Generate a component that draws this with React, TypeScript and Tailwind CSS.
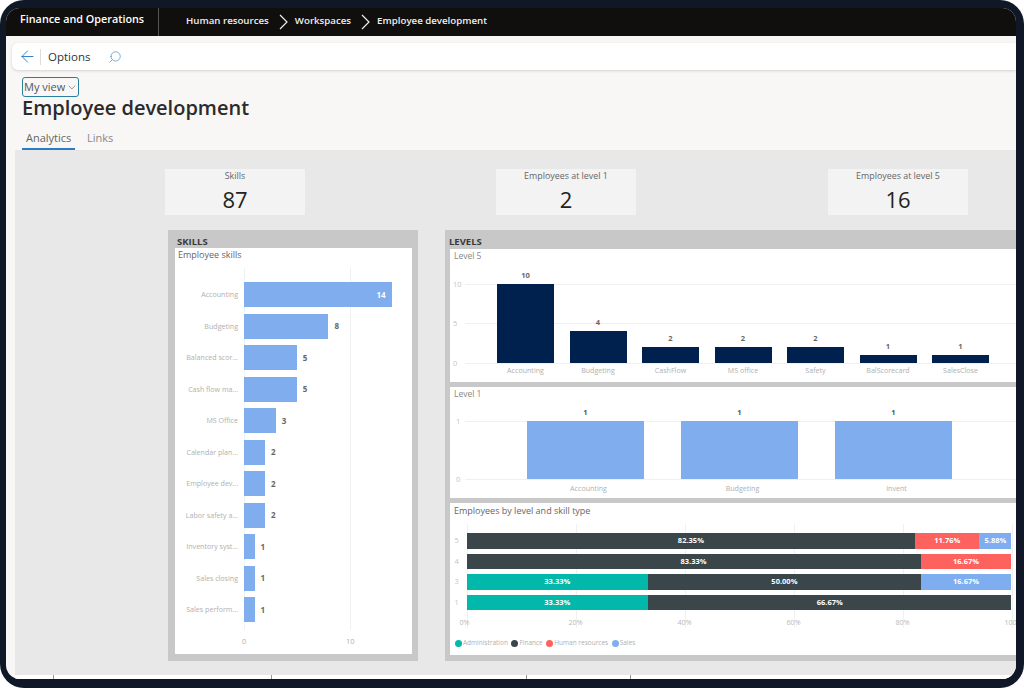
import React from 'react';
import { ArrowLeft, ChevronDown, Search } from 'lucide-react';

const skills = [
  { label: 'Accounting', value: 14 },
  { label: 'Budgeting', value: 8 },
  { label: 'Balanced scor...', value: 5 },
  { label: 'Cash flow ma...', value: 5 },
  { label: 'MS Office', value: 3 },
  { label: 'Calendar plan...', value: 2 },
  { label: 'Employee dev...', value: 2 },
  { label: 'Labor safety a...', value: 2 },
  { label: 'Inventory syst...', value: 1 },
  { label: 'Sales closing', value: 1 },
  { label: 'Sales perform...', value: 1 },
];

const level5 = [
  { label: 'Accounting', value: 10 },
  { label: 'Budgeting', value: 4 },
  { label: 'CashFlow', value: 2 },
  { label: 'MS office', value: 2 },
  { label: 'Safety', value: 2 },
  { label: 'BalScorecard', value: 1 },
  { label: 'SalesClose', value: 1 },
];

const level1 = ['Accounting', 'Budgeting', 'Invent'];

const TEAL = '#01b8aa';
const SLATE = '#3a4649';
const RED = '#fd625e';
const BLUE = '#7eaeef';

const stacked = [
  { level: '5', parts: [{ v: 82.35, c: SLATE }, { v: 11.76, c: RED }, { v: 5.88, c: BLUE }] },
  { level: '4', parts: [{ v: 83.33, c: SLATE }, { v: 16.67, c: RED }] },
  { level: '3', parts: [{ v: 33.33, c: TEAL }, { v: 50.0, c: SLATE }, { v: 16.67, c: BLUE }] },
  { level: '1', parts: [{ v: 33.33, c: TEAL }, { v: 66.67, c: SLATE }] },
];

const legend = [
  { name: 'Administration', c: TEAL },
  { name: 'Finance', c: SLATE },
  { name: 'Human resources', c: RED },
  { name: 'Sales', c: BLUE },
];

const ticks = [53, 271, 526, 630];

function Crumb() {
  return (
    <svg width="9" height="16" viewBox="0 0 9 16" fill="none" stroke="#eee" strokeWidth="1.2" className="ml-[10px] mr-[7px]">
      <path d="M1 1l7 7-7 7" />
    </svg>
  );
}

function Kpi({ title, value, className }: { title: string; value: string; className?: string }) {
  return (
    <div className={`w-[140px] h-[46px] bg-[#f3f3f3] flex flex-col items-center ${className ?? ''}`}>
      <div className="text-[8.9px] leading-[14px] text-[#666]">{title}</div>
      <div className="text-[22px] leading-[28px] mt-[2px] text-[#222]">{value}</div>
    </div>
  );
}

function SkillsChart() {
  return (
    <div className="relative mt-[21px] h-[362px]">
      <div className="absolute left-[69px] top-[-14px] h-[362px] w-px bg-[#f0f0f0]" />
      <div className="absolute left-[175px] top-[-14px] h-[362px] w-px bg-[#f0f0f0]" />
      <div className="relative flex flex-col gap-[6.5px]">
        {skills.map((s) => (
          <div key={s.label} className="flex items-center h-[25px]">
            <div className="w-[63px] mr-[6px] text-right text-[7.1px] text-[#b0b0b0] whitespace-nowrap">{s.label}</div>
            <div
              className="h-full bg-[#7fadee] flex items-center justify-end"
              style={{ width: s.value * 10.55 }}
            >
              {s.value === 14 && <span className="mr-[6px] text-[8px] font-bold text-white">14</span>}
            </div>
            {s.value !== 14 && <span className="ml-[6px] text-[8px] font-bold text-[#666]">{s.value}</span>}
          </div>
        ))}
      </div>
      <div className="absolute left-[67px] top-[354px] flex text-[7.5px] text-[#b0b0b0]">
        <span className="w-[104px]">0</span>
        <span>10</span>
      </div>
    </div>
  );
}

function Level5Chart() {
  return (
    <div className="relative h-[133px] bg-white overflow-hidden">
      <div className="ml-[4px] mt-[1px] text-[8.5px] leading-[12px] text-[#888]">Level 5</div>
      {[
        { t: 35, l: '10' },
        { t: 74, l: '5' },
        { t: 114, l: '0' },
      ].map((g) => (
        <div key={g.l} className="absolute left-0 right-0 flex items-center h-px" style={{ top: g.t }}>
          <span className="w-[15px] pl-[3px] text-[7.5px] text-[#c4c4c4]">{g.l}</span>
          <div className="flex-1 h-px bg-[#f0f0f0]" />
        </div>
      ))}
      <div className="absolute left-[47px] top-[15px] flex gap-[15.5px] items-end h-[99px]">
        {level5.map((b) => (
          <div key={b.label} className="w-[57px] flex flex-col items-center justify-end">
            <span className="text-[7.5px] leading-[12px] mb-[3px] font-bold text-[#666]">{b.value}</span>
            <div className="w-full bg-[#00204e]" style={{ height: b.value * 7.9 }} />
          </div>
        ))}
      </div>
      <div className="absolute left-[47px] top-[116px] flex gap-[15.5px]">
        {level5.map((b) => (
          <div key={b.label} className="w-[57px] text-center text-[7.1px] text-[#b0b0b0] whitespace-nowrap">{b.label}</div>
        ))}
      </div>
    </div>
  );
}

function Level1Chart() {
  return (
    <div className="relative h-[111px] bg-white overflow-hidden">
      <div className="ml-[4px] mt-[1px] text-[8.5px] leading-[12px] text-[#888]">Level 1</div>
      {[
        { t: 34, l: '1' },
        { t: 92, l: '0' },
      ].map((g) => (
        <div key={g.l} className="absolute left-0 right-0 flex items-center h-px" style={{ top: g.t }}>
          <span className="w-[15px] pl-[6px] text-[7.5px] text-[#c4c4c4]">{g.l}</span>
          <div className="flex-1 h-px bg-[#f0f0f0]" />
        </div>
      ))}
      <div className="absolute left-[77px] top-[19px] flex gap-[37px]">
        {level1.map((l) => (
          <div key={l} className="w-[117px] flex flex-col items-center">
            <span className="text-[7.5px] leading-[12px] mb-[3px] font-bold text-[#555]">1</span>
            <div className="w-full h-[58px] bg-[#7fadee]" />
            <span className="mt-[3px] ml-[6px] text-[7.1px] leading-[12px] text-[#b0b0b0]">{l}</span>
          </div>
        ))}
      </div>
    </div>
  );
}

function StackedChart() {
  return (
    <div className="relative h-[152px] bg-white overflow-hidden">
      <div className="ml-[4px] mt-[1px] text-[9px] leading-[14px] text-[#666]">Employees by level and skill type</div>
      {[0, 20, 40, 60, 80, 100].map((p) => (
        <div
          key={p}
          className="absolute top-[21px] h-[104px] w-px bg-[#f0f0f0]"
          style={{ left: 16.5 + p * 5.45 }}
        >
          <span className="absolute top-[92px] left-[-7px] text-[7.1px] leading-[12px] text-[#b8b8b8] whitespace-nowrap">{p}%</span>
        </div>
      ))}
      <div className="relative ml-[4.5px] mt-[15px] flex flex-col gap-[5px]">
        {stacked.map((r) => (
          <div key={r.level} className="flex items-center h-[15.5px]">
            <span className="w-[12px] text-[7.5px] text-[#c4c4c4]">{r.level}</span>
            <div className="w-[545px] h-full flex">
              {r.parts.map((p) => (
                <div
                  key={p.c}
                  className="h-full flex items-center justify-center text-[7.5px] font-bold text-white"
                  style={{ width: `${p.v}%`, backgroundColor: p.c }}
                >
                  {p.v.toFixed(2)}%
                </div>
              ))}
            </div>
          </div>
        ))}
      </div>
      <div className="absolute left-[5px] top-[135px] flex items-center gap-[3.5px] text-[6.5px] leading-[10px] text-[#b0b0b0]">
        {legend.map((l) => (
          <div key={l.name} className="flex items-center gap-[1px]">
            <span className="w-[7px] h-[7px] rounded-full" style={{ backgroundColor: l.c }} />
            <span>{l.name}</span>
          </div>
        ))}
      </div>
    </div>
  );
}

export default function App() {
  return (
    <div className="w-[1024px] h-[688px] bg-white overflow-hidden font-['Open_Sans',sans-serif]">
      <div className="w-full h-full rounded-[24px] bg-[#101828] pt-[8px] pl-[6px] pr-[8px] pb-[9px]">
        <div className="w-full h-full rounded-[14px] overflow-hidden bg-[#f8f7f5] flex flex-col">
          {/* nav bar */}
          <div className="h-[28px] shrink-0 bg-[#100f0e] flex items-center text-white">
            <div className="w-[153px] h-full pl-[14px] pb-[5px] border-r border-[#555] flex items-center text-[10.8px] font-semibold whitespace-nowrap">
              Finance and Operations
            </div>
            <div className="ml-[27px] pb-[1px] flex items-center text-[9.7px] font-semibold text-[#eee] whitespace-nowrap">
              <span>Human resources</span>
              <Crumb />
              <span>Workspaces</span>
              <Crumb />
              <span>Employee development</span>
            </div>
          </div>

          {/* toolbar */}
          <div className="shrink-0 pt-[7px] pl-[6px]">
            <div className="h-[27px] bg-white rounded-l-[6px] shadow-[0_1px_3px_rgba(0,0,0,0.15)] flex items-center">
              <ArrowLeft size={19} strokeWidth={1.2} className="ml-[6px] text-[#2b7cc4]" />
              <div className="ml-[3px] w-px h-[16px] bg-[#ddd]" />
              <span className="ml-[7px] mt-[1px] text-[11.5px] text-[#333]">Options</span>
              <Search size={14} strokeWidth={1.2} className="ml-[18px] text-[#4a8cc7] -scale-x-100" />
            </div>
          </div>

          {/* page head */}
          <div className="shrink-0 pl-[16px] pt-[7px] h-[80px]">
            <button className="h-[20px] w-[57px] border border-[#2b7f9e] rounded-[3px] flex items-center text-[11px] text-[#555] pl-[1px] whitespace-nowrap">
              My view
              <ChevronDown size={13} strokeWidth={1.2} className="ml-[1px]" />
            </button>
            <div className="text-[20px] leading-[22px] font-semibold text-[#2b2b2b] whitespace-nowrap">Employee development</div>
            <div className="mt-[6px] flex text-[11px] text-[#666]">
              <div className="h-[25px] w-[53px] pl-[4px] pt-[5px] border-b-2 border-[#2b7cc4]">Analytics</div>
              <div className="ml-[12px] pt-[5px] text-[#888]">Links</div>
            </div>
          </div>

          {/* dashboard */}
          <div className="relative flex-1 ml-[9px] bg-[#e8e8e8] overflow-hidden">
            <div className="flex pt-[19px] pl-[150px]">
              <Kpi title="Skills" value="87" />
              <Kpi title="Employees at level 1" value="2" className="ml-[191px]" />
              <Kpi title="Employees at level 5" value="16" className="ml-[192px]" />
            </div>
            <div className="flex mt-[15px] pl-[153px]">
              <div className="w-[250px] h-[431px] shrink-0 bg-[#c8c8c8] pl-[7px] pr-[6px]">
                <div className="h-[18px] pt-[6px] pl-[2px] text-[9.5px] leading-[12px] font-bold text-[#3a3a3a]">SKILLS</div>
                <div className="h-[406px] bg-white">
                  <div className="pl-[3px] text-[9px] leading-[13px] text-[#666]">Employee skills</div>
                  <SkillsChart />
                </div>
              </div>
              <div className="ml-[27px] flex-1 h-[431px] bg-[#c8c8c8] pl-[5px]">
                <div className="h-[19px] pt-[6px] -ml-[1px] text-[9.5px] leading-[12px] font-bold text-[#3a3a3a]">LEVELS</div>
                <div className="flex flex-col gap-[5px]">
                  <Level5Chart />
                  <Level1Chart />
                  <StackedChart />
                </div>
              </div>
            </div>
            <div className="absolute left-0 right-0 bottom-0 h-[4px] bg-white" />
          </div>
          <div className="relative h-0">
            {ticks.map((x) => (
              <div key={x} className="absolute bottom-0 w-px h-[4px] bg-[#999]" style={{ left: x - 6 }} />
            ))}
          </div>
        </div>
      </div>
    </div>
  );
}
